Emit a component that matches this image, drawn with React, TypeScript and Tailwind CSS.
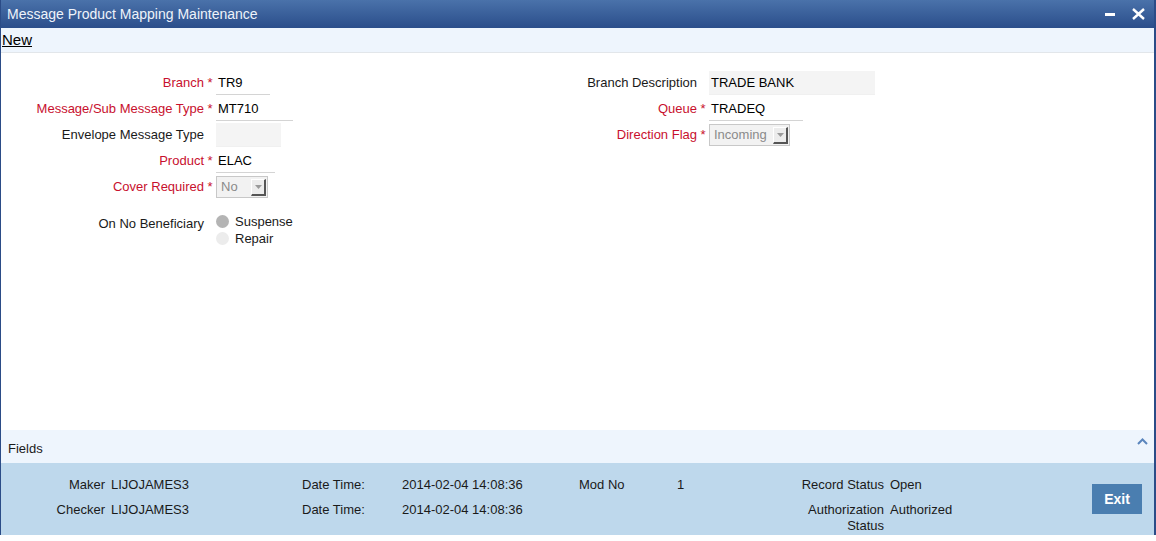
import React from "react";

const font = { fontFamily: '"Liberation Sans", Arial, sans-serif' };

function Label({ text, req, w }: { text: string; req?: boolean; w: string }) {
  return (
    <>
      <div className={`${w} text-right ${req ? "text-[#c8102e]" : "text-[#1a1a1a]"}`}>{text}</div>
      <div className="w-[12px] text-center text-[#c8102e]">{req ? "*" : ""}</div>
    </>
  );
}

function TextBox({ value, w, gray }: { value: string; w: string; gray?: boolean }) {
  return (
    <div
      className={`${w} h-[24px] flex items-center px-[2px] border-b ${
        gray ? "bg-[#f4f4f4] border-[#f0f0f0]" : "bg-white border-[#d4d4d4]"
      } text-black`}
    >
      {value}
    </div>
  );
}

function Select({ value, w }: { value: string; w: string }) {
  return (
    <div className={`${w} h-[22px] flex items-center border border-[#c8c8c8] bg-[#f2f2f2] pl-[4px] pr-[1px]`}>
      <span className="flex-1 text-[#8a8a8a]">{value}</span>
      <div className="w-[15px] h-[17px] bg-[#ececec] border-r-2 border-b-2 border-[#555] border-l border-t border-l-white border-t-white flex items-center justify-center">
        <svg width="7" height="4" viewBox="0 0 7 4">
          <path d="M0 0h7L3.5 4z" fill="#9a9a9a" />
        </svg>
      </div>
    </div>
  );
}

function Row({ children }: { children: React.ReactNode }) {
  return <div className="h-[26px] flex items-center">{children}</div>;
}

export default function App() {
  return (
    <div className="w-[1156px] h-[541px] bg-white text-[13px] flex flex-col" style={font}>
      <div className="h-[535px] flex flex-col border-l border-r-2 border-[#2b4c87]">
        <div className="h-[28px] flex items-center justify-between bg-gradient-to-b from-[#4a72aa] to-[#2b4e8b] pl-[6px] pr-[9px] text-[14px] text-[#eef3fa]">
          <span>Message Product Mapping Maintenance</span>
          <div className="flex items-center gap-[17px]">
            <div className="w-[10px] h-[3px] bg-white" />
            <svg width="13" height="12" viewBox="0 0 13 12">
              <path d="M1 1L12 11M12 1L1 11" stroke="white" strokeWidth="2.4" />
            </svg>
          </div>
        </div>
        <div className="h-[25px] flex items-center bg-[#eef5fd] border-b border-[#e2e6ea] pl-[1px] text-[15px] text-black">
          <span className="underline">New</span>
        </div>

        <div className="flex-1 flex flex-col pt-[17px]">
          <div className="flex">
            <div className="w-[479px] flex flex-col">
              <Row>
                <Label text="Branch" req w="w-[203px]" />
                <TextBox value="TR9" w="w-[54px]" />
              </Row>
              <Row>
                <Label text="Message/Sub Message Type" req w="w-[203px]" />
                <TextBox value="MT710" w="w-[77px]" />
              </Row>
              <Row>
                <Label text="Envelope Message Type" w="w-[203px]" />
                <TextBox value="" w="w-[65px]" gray />
              </Row>
              <Row>
                <Label text="Product" req w="w-[203px]" />
                <TextBox value="ELAC" w="w-[59px]" />
              </Row>
              <Row>
                <Label text="Cover Required" req w="w-[203px]" />
                <Select value="No" w="w-[52px]" />
              </Row>
              <div className="flex mt-[13px]">
                <div className="w-[203px] text-right text-[#1a1a1a] pt-[1px]">On No Beneficiary</div>
                <div className="w-[12px]" />
                <div className="flex flex-col">
                  <div className="h-[17px] flex items-center gap-[6px]">
                    <div className="w-[13px] h-[13px] rounded-full bg-[#b4b4b4]" />
                    <span className="text-[#1a1a1a]">Suspense</span>
                  </div>
                  <div className="h-[17px] flex items-center gap-[6px]">
                    <div className="w-[13px] h-[13px] rounded-full bg-[#ececec]" />
                    <span className="text-[#1a1a1a]">Repair</span>
                  </div>
                </div>
              </div>
            </div>
            <div className="flex flex-col">
              <Row>
                <Label text="Branch Description" w="w-[217px]" />
                <TextBox value="TRADE BANK" w="w-[166px]" gray />
              </Row>
              <Row>
                <Label text="Queue" req w="w-[217px]" />
                <TextBox value="TRADEQ" w="w-[94px]" />
              </Row>
              <Row>
                <Label text="Direction Flag" req w="w-[217px]" />
                <Select value="Incoming" w="w-[81px]" />
              </Row>
            </div>
          </div>
        </div>

        <div className="h-[33px] flex items-center justify-between bg-[#eef5fd] pl-[7px] pr-[6px] pt-[4px] text-[#1a1a1a]">
          <span>Fields</span>
          <svg width="11" height="7" viewBox="0 0 11 7" className="-mt-[15px]">
            <path d="M1 6L5.5 1.5L10 6" stroke="#5a85bd" strokeWidth="2" fill="none" />
          </svg>
        </div>
        <div className="h-[72px] flex items-center bg-[#bed8ec] text-[#1a1a1a] pr-[12px] leading-[16px]">
          <div className="flex-1 flex flex-col self-start pt-[14px]">
            <div className="h-[25px] flex">
              <div className="w-[104px] text-right">Maker</div>
              <div className="w-[191px] ml-[6px]">LIJOJAMES3</div>
              <div className="w-[100px]">Date Time:</div>
              <div className="w-[177px]">2014-02-04 14:08:36</div>
              <div className="w-[98px]">Mod No</div>
              <div className="w-[100px]">1</div>
              <div className="w-[107px] text-right">Record Status</div>
              <div className="ml-[6px]">Open</div>
            </div>
            <div className="flex">
              <div className="w-[104px] text-right">Checker</div>
              <div className="w-[191px] ml-[6px]">LIJOJAMES3</div>
              <div className="w-[100px]">Date Time:</div>
              <div className="w-[177px]">2014-02-04 14:08:36</div>
              <div className="w-[98px]" />
              <div className="w-[100px]" />
              <div className="w-[107px] text-right">Authorization Status</div>
              <div className="ml-[6px]">Authorized</div>
            </div>
          </div>
          <button className="w-[50px] h-[30px] bg-[#4a7eb0] text-white font-bold text-[14px]">Exit</button>
        </div>
      </div>
    </div>
  );
}
